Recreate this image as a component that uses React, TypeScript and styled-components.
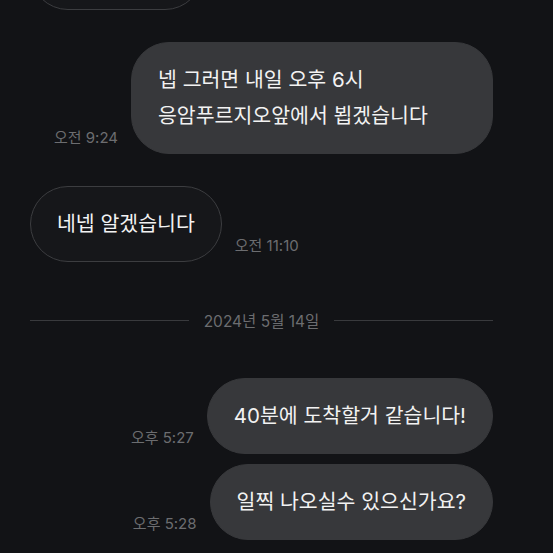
// Packages
import styled, { createGlobalStyle } from 'styled-components';

// Data
type Message = {
  id: number;
  mine: boolean;
  lines: string[];
  time: string;
  width?: number;
  grouped?: boolean;
};

const before: Message[] = [
  { id: 1, mine: false, lines: ['네 알겠습니다'], time: '오전 9:21' },
  {
    id: 2,
    mine: true,
    lines: ['넵 그러면 내일 오후 6시', '응암푸르지오앞에서 뵙겠습니다'],
    time: '오전 9:24',
    width: 362,
  },
  { id: 3, mine: false, lines: ['네넵 알겠습니다'], time: '오전 11:10' },
];

const after: Message[] = [
  { id: 4, mine: true, lines: ['40분에 도착할거 같습니다!'], time: '오후 5:27' },
  {
    id: 5,
    mine: true,
    lines: ['일찍 나오실수 있으신가요?'],
    time: '오후 5:28',
    grouped: true,
  },
];

// Main
function MessageRow({ message }: { message: Message }) {
  return (
    <Row $mine={message.mine} $grouped={!!message.grouped}>
      <Bubble
        $mine={message.mine}
        style={message.width ? { width: message.width } : undefined}
      >
        {message.lines.map((line) => (
          <Line key={line}>{line}</Line>
        ))}
      </Bubble>
      <Time>{message.time}</Time>
    </Row>
  );
}

export default function App() {
  return (
    <>
      <GlobalStyle />
      <Screen>
        <Chat>
          {before.map((m) => (
            <MessageRow key={m.id} message={m} />
          ))}
          <DateDivider>
            <Rule />
            <DateText>2024년 5월 14일</DateText>
            <Rule />
          </DateDivider>
          {after.map((m) => (
            <MessageRow key={m.id} message={m} />
          ))}
        </Chat>
      </Screen>
    </>
  );
}

const GlobalStyle = createGlobalStyle`
  html, body {
    margin: 0;
    padding: 0;
    background: #121316;
  }
  body {
    font-family: 'Inter', 'Noto Sans CJK KR', sans-serif;
    -webkit-font-smoothing: antialiased;
  }
`;

const Screen = styled.div`
  width: 553px;
  height: 553px;
  overflow: hidden;
  background: #121316;
`;

const Chat = styled.div`
  display: flex;
  flex-direction: column;
  margin-top: -66px;
  padding: 0 60px 0 30px;
`;

const Row = styled.div<{ $mine: boolean; $grouped: boolean }>`
  display: flex;
  flex-direction: ${(p) => (p.$mine ? 'row-reverse' : 'row')};
  justify-content: flex-start;
  align-items: flex-end;
  gap: 13px;
  margin-top: ${(p) => (p.$grouped ? '10px' : '32px')};

  &:first-child {
    margin-top: 0;
  }
`;

const Bubble = styled.div<{ $mine: boolean }>`
  box-sizing: border-box;
  padding: 19px 26px;
  border-radius: 38px;
  background: ${(p) => (p.$mine ? '#37383b' : '#16171a')};
  border: 1px solid ${(p) => (p.$mine ? '#37383b' : '#3c3d40')};
  color: #f2f2f2;
  font-size: 20.5px;
  line-height: 36px;
  white-space: nowrap;
`;

const Line = styled.div``;

const Time = styled.span`
  margin-bottom: 7px;
  font-size: 15px;
  line-height: 18px;
  color: #6c6d70;
  white-space: nowrap;
`;

const DateDivider = styled.div`
  display: flex;
  align-items: center;
  gap: 15px;
  height: 20px;
  margin: 48px 0 48px;

  & + ${Row} {
    margin-top: 0;
  }
`;

const Rule = styled.div`
  flex: 1;
  height: 1px;
  background: #393a3d;
`;

const DateText = styled.span`
  font-size: 15.5px;
  color: #6c6d70;
  white-space: nowrap;
`;
